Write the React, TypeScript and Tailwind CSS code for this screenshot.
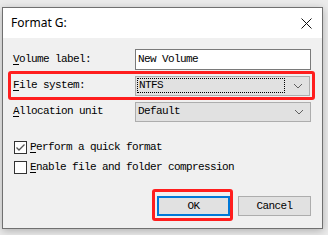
import React from "react";

const mono = { fontFamily: '"Liberation Mono", "DejaVu Sans Mono", monospace' };
const txt = "text-[11px] tracking-[-0.6px] text-black";

function Chevron() {
  return (
    <svg width="10" height="6" viewBox="0 0 10 6" className="shrink-0">
      <polyline points="1,1 5,5 9,1" fill="none" stroke="#606060" strokeWidth="1" />
    </svg>
  );
}

function Check({ checked, children }: { checked?: boolean; children: React.ReactNode }) {
  return (
    <div className="flex items-center h-[13px] ml-[1px]">
      <div className="w-[13px] h-[13px] border border-[#333] bg-white flex items-center justify-center shrink-0">
        {checked && (
          <svg width="11" height="11" viewBox="0 0 11 11">
            <polyline points="1.5,5.5 4,8 9.5,2.5" fill="none" stroke="#555" strokeWidth="1.3" />
          </svg>
        )}
      </div>
      <span className={`ml-[3px] leading-[13px] whitespace-nowrap ${"text-[11px] tracking-[-0.6px] text-black"}`} style={mono}>
        {children}
      </span>
    </div>
  );
}

export default function App() {
  return (
    <div className="w-[328px] h-[235px] bg-[#ebebeb] pt-[7px] pl-[2px] overflow-hidden">
      <div className="relative w-[321px] h-[222px] border border-[#707070] bg-[#f0f0f0] flex flex-col shadow-[0_2px_8px_rgba(0,0,0,0.25)]">
        <div className="h-[30px] bg-white flex items-center justify-between pl-[8px] pr-[10px]">
          <span className="text-[12px] text-black" style={{ fontFamily: '"Noto Sans", "Liberation Sans", sans-serif' }}>
            Format G:
          </span>
          <svg width="11" height="11" viewBox="0 0 11 11">
            <path d="M0.5 0.5 L10.5 10.5 M10.5 0.5 L0.5 10.5" stroke="#111" strokeWidth="1" />
          </svg>
        </div>
        <div className="flex-1 pl-[10px] pr-[10px] pt-[11px] flex flex-col">
          <div className="flex items-center h-[21px]">
            <div className="w-[122px] text-[11px] tracking-[-0.6px] text-black" style={mono}>
              <u className="underline-offset-2">V</u>olume label:
            </div>
            <div className="w-[176px] h-[21px] bg-white border border-[#7a7a7a] flex items-center pl-[2px] text-[11px] tracking-[-0.6px] text-black" style={mono}>
              New Volume
            </div>
          </div>
          <div className="flex items-center h-[21px] mt-[5px]">
            <div className="w-[122px] text-[11px] tracking-[-0.6px] text-black" style={mono}>
              <u className="underline-offset-2">F</u>ile system:
            </div>
            <div className="w-[175px] h-[20px] bg-[#e1e1e1] border border-[#adadad] flex items-center pl-[1px] pr-[6px]">
              <div className="flex-1 h-[15px] border border-dotted border-black flex items-center pl-[1px] mr-[8px] text-[11px] tracking-[-0.6px] text-black" style={mono}>
                NTFS
              </div>
              <Chevron />
            </div>
          </div>
          <div className="flex items-center h-[21px] mt-[5px]">
            <div className="w-[122px] text-[11px] tracking-[-0.6px] text-black" style={mono}>
              <u className="underline-offset-2">A</u>llocation unit
            </div>
            <div className="w-[176px] h-[20px] bg-[#e1e1e1] border border-[#adadad] flex items-center pl-[2px] pr-[6px]">
              <div className="flex-1 text-[11px] tracking-[-0.6px] text-black" style={mono}>
                Default
              </div>
              <Chevron />
            </div>
          </div>
          <div className="mt-[19px] flex flex-col gap-[7px]">
            <Check checked>
              <u className="underline-offset-2">P</u>erform a quick format
            </Check>
            <Check>
              <u className="underline-offset-2">E</u>nable file and folder compression
            </Check>
          </div>
          <div className="mt-[22px] flex justify-end gap-[8px] pr-[1px]">
            <div className="w-[73px] h-[20px] bg-[#e1e1e1] border-2 border-[#0078d7] flex items-center justify-center text-[11px] tracking-[-0.6px] text-black" style={mono}>
              OK
            </div>
            <div className="w-[73px] h-[20px] bg-[#e1e1e1] border border-[#adadad] flex items-center justify-center text-[11px] tracking-[-0.6px] text-black" style={mono}>
              Cancel
            </div>
          </div>
        </div>
        <div className="absolute left-[5px] top-[63px] w-[307px] h-[29px] border-[3px] border-[#ff1e1e] rounded-[3px]" />
        <div className="absolute left-[149px] top-[181px] w-[81px] h-[32px] border-[3px] border-[#ff1e1e] rounded-[3px]" />
      </div>
    </div>
  );
}
